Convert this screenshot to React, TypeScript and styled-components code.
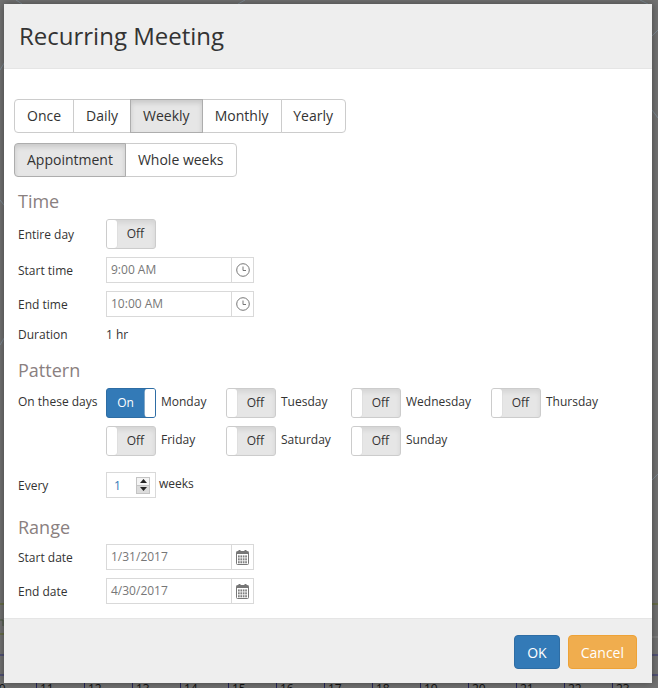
import styled, { createGlobalStyle } from "styled-components";

const GlobalStyle = createGlobalStyle`
  html, body {
    margin: 0;
    padding: 0;
    height: 688px;
    overflow: hidden;
  }

  * {
    box-sizing: border-box;
  }
`;

const Backdrop = styled.div`
  position: relative;
  width: 658px;
  height: 688px;
  padding: 4px 6px 5px 4px;
  background: #727272;
  font-family: "Open Sans", sans-serif;
  overflow: hidden;
`;

const ChartLines = styled.svg`
  position: absolute;
  top: 0;
  left: 0;
`;

const Tick = styled.div<{ $left: number }>`
  position: absolute;
  left: ${(p) => p.$left}px;
  top: 683px;
  padding-left: 3px;
  border-left: 1px solid #26265c;
  font-size: 12px;
  line-height: 12px;
  height: 5px;
  color: #111;
`;

const Dialog = styled.div`
  position: relative;
  display: flex;
  flex-direction: column;
  width: 648px;
  height: 679px;
  background: #fff;
  box-shadow: 0 0 8px rgba(0, 0, 0, 0.4);
`;

const Header = styled.div`
  height: 65px;
  padding: 15px 15px 0;
  background: #eee;
  border-bottom: 1px solid #e5e5e5;
`;

const Title = styled.h4`
  margin: 0;
  font-size: 24px;
  font-weight: 400;
  line-height: 34px;
  color: #333;
`;

const Body = styled.div`
  flex: 1;
  padding: 30px 10px 0;
`;

const ButtonGroup = styled.div`
  display: flex;
  margin-bottom: 10px;
  height: 34px;
`;

const SegButton = styled.div<{ $active?: boolean; $width?: number }>`
  display: flex;
  align-items: center;
  justify-content: center;
  ${(p) => (p.$width ? `width: ${p.$width}px;` : "padding: 0 12px;")}
  padding-bottom: 2px;
  margin-left: -1px;
  font-size: 14px;
  color: #333;
  background: ${(p) => (p.$active ? "#e6e6e6" : "#fff")};
  border: 1px solid ${(p) => (p.$active ? "#adadad" : "#ccc")};
  box-shadow: ${(p) => (p.$active ? "inset 0 3px 5px rgba(0, 0, 0, 0.125)" : "none")};
  z-index: ${(p) => (p.$active ? 1 : 0)};

  &:first-child {
    margin-left: 0;
    border-radius: 4px 0 0 4px;
  }

  &:last-child {
    border-radius: 0 4px 4px 0;
  }
`;

const SectionTitle = styled.div<{ $top?: number; $bottom?: number }>`
  margin: ${(p) => p.$top ?? 0}px 0 ${(p) => p.$bottom ?? 5}px 4px;
  font-size: 18px;
  line-height: 25px;
  color: #8a8080;
`;

const Row = styled.div<{ $height: number; $gap?: number }>`
  display: flex;
  align-items: center;
  height: ${(p) => p.$height}px;
  margin-bottom: ${(p) => p.$gap ?? 8}px;
  padding-left: 4px;
`;

const Label = styled.div`
  flex: 0 0 88px;
  font-size: 12px;
  color: #333;
`;

const Value = styled.div`
  font-size: 12px;
  color: #333;
`;

const SwitchBox = styled.div<{ $on?: boolean }>`
  display: flex;
  flex: 0 0 50px;
  justify-content: ${(p) => (p.$on ? "flex-start" : "flex-end")};
  height: 30px;
  overflow: hidden;
  border: 1px solid ${(p) => (p.$on ? "#2e6da4" : "#ccc")};
  border-radius: 3px;
  position: relative;
  background: ${(p) => (p.$on ? "#337ab7" : "#e6e6e6")};
  box-shadow: ${(p) => (p.$on ? "none" : "inset 0 3px 5px rgba(0, 0, 0, 0.08)")};
`;

const SwitchText = styled.span<{ $on?: boolean }>`
  width: 38px;
  padding-right: 1px;
  line-height: 28px;
  text-align: center;
  font-size: 12px;
  color: ${(p) => (p.$on ? "#fff" : "#333")};
`;

const SwitchHandle = styled.span<{ $on?: boolean }>`
  position: absolute;
  top: 0;
  bottom: 0;
  width: 10px;
  ${(p) => (p.$on ? "right: 0;" : "left: 0;")}
  background: #fff;
  border-radius: ${(p) => (p.$on ? "3px 0 0 3px" : "0 3px 3px 0")};
  box-shadow: 0 0 0 0.5px #d8d8d8;
`;

const PickerBox = styled.div`
  display: flex;
  width: 148px;
  height: 26px;
  border: 1px solid #d9d9d9;
`;

const PickerInput = styled.div`
  flex: 1;
  padding-left: 4px;
  font-size: 12px;
  line-height: 24px;
  color: #777;
  border-right: 1px solid #d9d9d9;
`;

const PickerIcon = styled.div`
  display: flex;
  flex: 0 0 21px;
  align-items: center;
  justify-content: center;

  svg {
    display: block;
  }
`;

const DaysGrid = styled.div`
  display: grid;
  grid-template-columns: 120px 125px 140px auto;
  row-gap: 8px;
  flex: 1;
`;

const DayItem = styled.div`
  display: flex;
  align-items: flex-start;
  height: 30px;
`;

const DayName = styled.span`
  margin-left: 5px;
  font-size: 12px;
  line-height: 28px;
  color: #333;
`;

const PatternRow = styled.div`
  display: flex;
  padding-left: 4px;
  margin-bottom: 16px;
`;

const PatternLabel = styled(Label)`
  line-height: 28px;
`;

const Spinner = styled.div`
  display: flex;
  align-items: center;
  justify-content: space-between;
  width: 50px;
  height: 26px;
  padding: 0 5px 0 7px;
  border: 1px solid #d9d9d9;
  font-size: 12px;
  color: #337ab7;
`;

const SpinnerArrows = styled.div`
  display: flex;
  flex-direction: column;
  justify-content: space-between;
  width: 14px;
  height: 17px;
  background: #c4c4c4;
  padding: 1px;
`;

const SpinnerStep = styled.div<{ $down?: boolean }>`
  display: flex;
  align-items: center;
  justify-content: center;
  height: 7px;
  background: ${(p) => (p.$down ? "#dcdcdc" : "#f4f4f4")};
`;

const UnitText = styled.span`
  margin: -3px 0 0 3px;
  font-size: 12px;
  color: #333;
`;

const Footer = styled.div`
  display: flex;
  justify-content: flex-end;
  gap: 8px;
  height: 65px;
  padding: 16px 15px 0;
  background: #eee;
  border-top: 1px solid #e5e5e5;
`;

const FooterButton = styled.div<{ $bg: string; $border: string }>`
  display: flex;
  align-items: center;
  height: 34px;
  padding: 0 12px;
  font-size: 14px;
  color: #fff;
  background: ${(p) => p.$bg};
  border: 1px solid ${(p) => p.$border};
  border-radius: 4px;
`;

const ClockIcon = () => (
  <svg width="14" height="14" viewBox="0 0 14 14" fill="none" stroke="#777" strokeWidth="1">
    <circle cx="7" cy="7" r="6.3" />
    <path d="M7 3.5V7.5H10" />
  </svg>
);

const CalendarIcon = () => (
  <svg width="13" height="15" viewBox="0 0 13 15">
    <rect x="0.5" y="1.5" width="12" height="13" rx="1" fill="#fff" stroke="#777" />
    <rect x="0.5" y="1.5" width="12" height="2.5" fill="#777" />
    <rect x="2.5" y="0" width="2" height="3" fill="#777" />
    <rect x="8.5" y="0" width="2" height="3" fill="#777" />
    {[0, 1, 2].map((r) =>
      [0, 1, 2, 3].map((c) => (
        <rect key={`${r}-${c}`} x={2 + c * 2.4} y={5.4 + r * 2.9} width="1.7" height="2.1" fill="#808080" />
      ))
    )}
  </svg>
);

const Toggle = ({ on }: { on?: boolean }) => (
  <SwitchBox $on={on}>
    <SwitchHandle $on={on} />
    <SwitchText $on={on}>{on ? "On" : "Off"}</SwitchText>
  </SwitchBox>
);

const Picker = ({ value, icon }: { value: string; icon: "clock" | "calendar" }) => (
  <PickerBox>
    <PickerInput>{value}</PickerInput>
    <PickerIcon>{icon === "clock" ? <ClockIcon /> : <CalendarIcon />}</PickerIcon>
  </PickerBox>
);

const Day = ({ name, on }: { name: string; on?: boolean }) => (
  <DayItem>
    <Toggle on={on} />
    <DayName>{name}</DayName>
  </DayItem>
);

const ticks = [10, 11, 12, 13, 14, 15, 16, 17, 18, 19, 20, 21, 22, 23];

export default function App() {
  return (
    <>
      <GlobalStyle />
      <Backdrop>
        <ChartLines width="658" height="688" fill="none">
          <path d="M0 604H658M0 634H4" stroke="#5f6a22" />
          <path d="M0 620H3V626" stroke="#4a5a40" />
          <path d="M0 655H658M0 675H658" stroke="#33337a" />
          <path d="M652 637H658" stroke="#8a8a8a" />
          <path
            d="M0 70L6 60M0 200L8 210M0 345L6 335M16 0L22 4M245 0L238 4M640 0L648 4M652 36L658 30M652 110L658 118M652 480L658 474"
            stroke="#7f8c96"
          />
        </ChartLines>
        {ticks.map((t, i) => (
          <Tick key={t} $left={-12 + i * 48}>
            {t}
          </Tick>
        ))}
        <Dialog>
          <Header>
            <Title>Recurring Meeting</Title>
          </Header>
          <Body>
            <ButtonGroup>
              <SegButton>Once</SegButton>
              <SegButton>Daily</SegButton>
              <SegButton $active>Weekly</SegButton>
              <SegButton $width={80}>Monthly</SegButton>
              <SegButton $width={65}>Yearly</SegButton>
            </ButtonGroup>
            <ButtonGroup>
              <SegButton $active>Appointment</SegButton>
              <SegButton>Whole weeks</SegButton>
            </ButtonGroup>

            <SectionTitle $top={12}>Time</SectionTitle>
            <Row $height={30}>
              <Label>Entire day</Label>
              <Toggle />
            </Row>
            <Row $height={26}>
              <Label>Start time</Label>
              <Picker value="9:00 AM" icon="clock" />
            </Row>
            <Row $height={26}>
              <Label>End time</Label>
              <Picker value="10:00 AM" icon="clock" />
            </Row>
            <Row $height={19} $gap={14}>
              <Label>Duration</Label>
              <Value>1 hr</Value>
            </Row>

            <SectionTitle>Pattern</SectionTitle>
            <PatternRow>
              <PatternLabel>On these days</PatternLabel>
              <DaysGrid>
                <Day name="Monday" on />
                <Day name="Tuesday" />
                <Day name="Wednesday" />
                <Day name="Thursday" />
                <Day name="Friday" />
                <Day name="Saturday" />
                <Day name="Sunday" />
              </DaysGrid>
            </PatternRow>
            <Row $height={26} $gap={17}>
              <Label>Every</Label>
              <Spinner>
                1
                <SpinnerArrows>
                  <SpinnerStep>
                    <svg width="7" height="4" viewBox="0 0 7 4">
                      <path d="M3.5 0L7 4H0Z" fill="#222" />
                    </svg>
                  </SpinnerStep>
                  <SpinnerStep $down>
                    <svg width="7" height="4" viewBox="0 0 7 4">
                      <path d="M0 0H7L3.5 4Z" fill="#222" />
                    </svg>
                  </SpinnerStep>
                </SpinnerArrows>
              </Spinner>
              <UnitText>weeks</UnitText>
            </Row>

            <SectionTitle $bottom={4}>Range</SectionTitle>
            <Row $height={26}>
              <Label>Start date</Label>
              <Picker value="1/31/2017" icon="calendar" />
            </Row>
            <Row $height={26}>
              <Label>End date</Label>
              <Picker value="4/30/2017" icon="calendar" />
            </Row>
          </Body>
          <Footer>
            <FooterButton $bg="#337ab7" $border="#2e6da4">
              OK
            </FooterButton>
            <FooterButton $bg="#f0ad4e" $border="#eea236">
              Cancel
            </FooterButton>
          </Footer>
        </Dialog>
      </Backdrop>
    </>
  );
}
